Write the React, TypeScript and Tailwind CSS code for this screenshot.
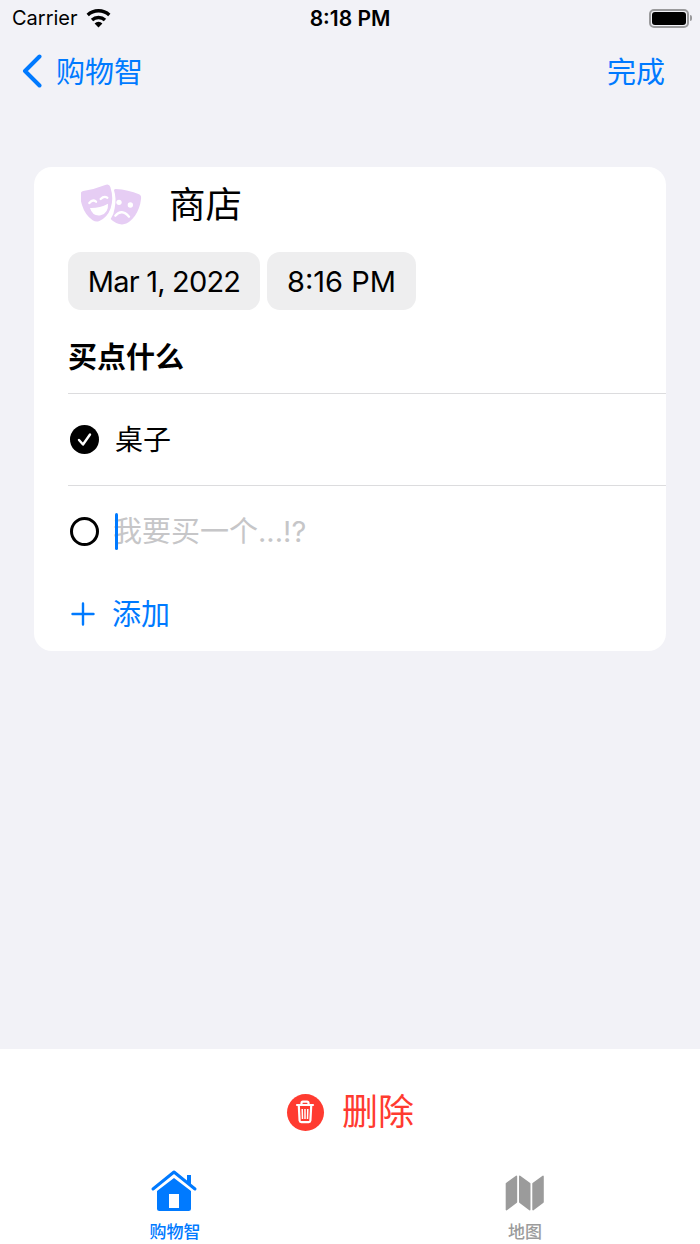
const cjk = "font-['Inter','Noto_Sans_CJK_SC',sans-serif]";

function Wifi() {
  return (
    <svg width="25" height="20" viewBox="0 0 25 20" fill="none" stroke="#000" strokeWidth="3.4">
      <path d="M1.700 7A16 16 0 0 1 23.300 7" />
      <path d="M6 12A9.500 9.500 0 0 1 19 12" />
      <path d="M12.500 19.500 8.600 15.400A5.600 5.600 0 0 1 16.400 15.400Z" fill="#000" stroke="none" />
    </svg>
  );
}

function Battery() {
  return (
    <div className="flex items-center gap-[1px]">
      <div className="w-[40px] h-[19px] rounded-[5px] border-2 border-[#9a9a9c] p-[1px]">
        <div className="w-full h-full rounded-[3px] bg-black" />
      </div>
      <div className="w-[2px] h-[6px] rounded-r-full bg-[#9a9a9c]" />
    </div>
  );
}

function Masks() {
  return (
    <svg width="62" height="44" viewBox="33 24 186 132">
      <path fill="#e6cdf4" d="M137 42Q175 44 207 58Q215 62 213 72Q210 100 195 122Q178 145 160 148Q140 150 122 132Q132 118 134 100Q140 70 132 46Q133 42 137 42Z" />
      <circle cx="147" cy="82" r="8" fill="#fff" />
      <circle cx="181" cy="90" r="8" fill="#fff" />
      <path d="M136 122Q155 100 177 125" fill="none" stroke="#fff" strokeWidth="7" strokeLinecap="round" />
      <path fill="#e6cdf4" d="M40 48Q75 42 108 29Q118 26 121 36Q132 70 122 100Q112 128 88 138Q78 142 68 136Q45 120 36 90Q30 70 31 58Q32 50 40 48Z" />
      <path d="M58 84Q68 72 78 80M92 72Q102 62 112 68" fill="none" stroke="#fff" strokeWidth="7" strokeLinecap="round" />
      <path fill="#fff" d="M60 99Q88 100 114 86Q116 114 92 121Q68 125 60 99Z" />
    </svg>
  );
}

function Home() {
  return (
    <svg className="-ml-[2px]" width="48" height="42" viewBox="0 0 48 42">
      <path fill="#007aff" fillRule="evenodd" d="M7 21 24 8 41 21V38.500Q41 41 38.500 41H9.500Q7 41 7 38.500Z M19 24H29V38H19Z" />
      <path fill="none" stroke="#007aff" strokeWidth="3" strokeLinecap="round" strokeLinejoin="round" d="M3 19 24 2 45 19" />
      <path fill="#007aff" d="M37 5h4v10l-4-3z" />
    </svg>
  );
}

function MapIcon() {
  return (
    <svg className="-ml-[2px]" width="41" height="38" viewBox="-1 -1 42 40" fill="#9b9b9b" stroke="#9b9b9b" strokeWidth="1.600" strokeLinejoin="round">
      <path d="M1 9 11.500 1.500V28.500L1 36.500Z" />
      <path d="M15 1.500 25.500 9V36.500L15 28.500Z" />
      <path d="M29 9 39.500 1.500V28.500L29 36.500Z" />
    </svg>
  );
}

function Trash() {
  return (
    <svg width="20" height="24" viewBox="0 0 20 24" fill="none" stroke="#fff">
      <path strokeWidth="2.200" strokeLinecap="round" d="M2 5h16" />
      <path strokeWidth="2.200" d="M6.500 4.500V3c0-.8.6-1.400 1.400-1.400h4.200c.8 0 1.400.6 1.400 1.400v1.500" />
      <path strokeWidth="2.200" d="M3.800 6l.8 14.500c.1 1 .8 1.600 1.700 1.600h7.400c.9 0 1.600-.6 1.700-1.600L16.200 6" />
      <path strokeWidth="1.500" d="M7.200 9l.3 10M10 9v10M12.800 9l-.3 10" />
    </svg>
  );
}

export default function App() {
  return (
    <div className={`${cjk} w-[700px] h-[1244px] bg-[#f2f2f7] flex flex-col overflow-hidden`}>
      <div className="h-[36px] pl-[12px] pr-[8px] flex items-center text-black">
        <div className="flex-1 flex items-center gap-[8px]">
          <span className="text-[20px] leading-none">Carrier</span>
          <Wifi />
        </div>
        <span className="text-[21px] leading-none font-semibold mr-[4px]">8:18 PM</span>
        <div className="flex-1 flex justify-end"><Battery /></div>
      </div>

      <div className="h-[70px] pl-[22px] pr-[35px] flex items-center justify-between text-[#007aff] text-[29px]">
        <div className="flex items-center gap-[14px]">
          <svg width="20" height="34" viewBox="0 0 20 34" fill="none" stroke="#007aff" strokeWidth="4" strokeLinecap="round" strokeLinejoin="round">
            <path d="M17.500 2.500 3 17l14.500 14.500" />
          </svg>
          <span className="leading-none pt-[2px]">购物智</span>
        </div>
        <span className="leading-none pt-[3px]">完成</span>
      </div>

      <div className="mt-[61px] mx-[34px] h-[484px] bg-white rounded-[18px] flex flex-col">
        <div className="h-[85px] pl-[47px] pb-[10px] flex items-center gap-[27px]">
          <Masks />
          <span className="text-[36.500px] leading-none text-black -ml-[1px] pt-[2px]">商店</span>
        </div>
        <div className="pl-[34px] flex gap-[7px] text-[29px] text-black">
          <div className="w-[192px] h-[58px] rounded-[13px] bg-[#eeeeef] flex items-center justify-center tracking-[-0.8px] pt-[1px]">Mar 1, 2022</div>
          <div className="w-[149px] h-[58px] rounded-[13px] bg-[#eeeeef] flex items-center justify-center pt-[1px]">8:16 PM</div>
        </div>
        <div className="ml-[34px] h-[84px] pt-[12px] flex items-center border-b border-[#dcdcde] text-[29px] font-semibold text-black">买点什么</div>
        <div className="ml-[34px] h-[92px] flex items-center gap-[16px] border-b border-[#dcdcde] text-[28px] text-black">
          <svg className="ml-[2px]" width="29" height="29" viewBox="0 0 29 29">
            <circle cx="14.500" cy="14.500" r="14.500" fill="#000" />
            <path d="M9 15l4 4.500 7-10" fill="none" stroke="#fff" strokeWidth="2.400" strokeLinecap="round" strokeLinejoin="round" />
          </svg>
          <span className="leading-none">桌子</span>
        </div>
        <div className="ml-[34px] h-[90px] flex items-center gap-[16px] text-[29px]">
          <div className="ml-[2px] w-[29px] h-[29px] rounded-full border-[3px] border-black" />
          <div className="flex items-center">
            <div className="relative z-10 w-[3px] h-[37px] rounded-full bg-[#007aff]" />
            <span className="-ml-[5px] leading-none text-[#c6c6c8]">我要买一个...!?</span>
          </div>
        </div>
        <div className="ml-[34px] flex-1 flex items-center gap-[17px] text-[29px] text-[#007aff]">
          <svg className="ml-[3px]" width="24" height="24" viewBox="0 0 24 24" fill="none" stroke="#007aff" strokeWidth="2.400" strokeLinecap="round">
            <path d="M12 1.500v21M1.500 12h21" />
          </svg>
          <span className="leading-none pt-[1px]">添加</span>
        </div>
      </div>

      <div className="mt-auto h-[195px] bg-white flex flex-col">
        <div className="h-[112px] pt-[14px] flex items-center justify-center gap-[18px] pl-[1px] text-[#ff3b30]">
          <div className="w-[37px] h-[37px] rounded-full bg-[#ff3b30] flex items-center justify-center"><Trash /></div>
          <span className="text-[36px] leading-none">删除</span>
        </div>
        <div className="flex-1 flex pt-[9px]">
          <div className="w-[350px] flex flex-col items-center">
            <Home />
            <span className="text-[17px] leading-none mt-[12px] text-[#007aff] font-medium">购物智</span>
          </div>
          <div className="w-[350px] flex flex-col items-center pt-[4px]">
            <MapIcon />
            <span className="text-[17px] leading-none mt-[12px] text-[#9b9b9b] font-medium">地图</span>
          </div>
        </div>
      </div>
    </div>
  );
}
